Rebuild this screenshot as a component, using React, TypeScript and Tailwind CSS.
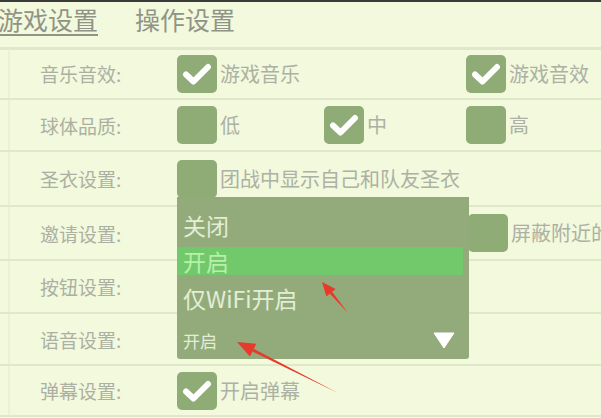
import type { ReactNode } from 'react';

const font = { fontFamily: '"Noto Sans CJK SC", "Noto Sans", sans-serif' };

function Check({ on = false }: { on?: boolean }) {
  return (
    <div className="w-[40px] h-[38px] shrink-0 rounded-[5px] bg-[#8fab76] flex items-center justify-center">
      {on && (
        <svg width="30" height="24" viewBox="0 0 30 24">
          <path
            d="M4 12.5 L11.5 19.5 L26 5"
            fill="none"
            stroke="#ffffff"
            strokeWidth="6"
            strokeLinecap="round"
            strokeLinejoin="round"
          />
        </svg>
      )}
    </div>
  );
}

function Option({ on, text, col }: { on?: boolean; text?: string; col: string }) {
  return (
    <div className={`flex items-center gap-[3px] ${col}`}>
      <Check on={on} />
      {text && <span className="text-[20px] text-[#adb1a4] whitespace-nowrap leading-none">{text}</span>}
    </div>
  );
}

function Row({ label, h, children }: { label: string; h: string; children?: ReactNode }) {
  return (
    <div className={`flex items-center border-b-2 border-[#e0e8ca] ${h}`}>
      <div className="w-[177px] shrink-0 pl-[40px] text-[19px] text-[#acb0a3] leading-none">{label}</div>
      <div className="relative flex-1 grid grid-cols-[147px_142px_135px] items-center">{children}</div>
    </div>
  );
}

function VoiceSelect() {
  return (
    <div className="relative w-[292px]">
      {/* opened list */}
      <div className="absolute bottom-full left-0 w-[292px] h-[124px] bg-[#93ab7a] pt-[10px] text-[23px] leading-none text-[#e3eed6]">
        <div className="h-[36px] flex items-center pl-[6px]">关闭</div>
        <div className="mt-[4px] mr-[6px] h-[28px] flex items-center pl-[6px] bg-[#72c96c] text-[#b8f0a8]">开启</div>
        <div className="h-[46px] flex items-center pl-[6px]">仅WiFi开启</div>
      </div>
      <div className="h-[38px] bg-[#93ab7a] rounded-b-[3px] flex items-center justify-between pl-[6px] pr-[14px]">
        <span className="text-[17px] leading-none text-[#e3eed6]">开启</span>
        <svg width="22" height="17" viewBox="0 0 22 17">
          <path d="M1 1 L21 1 L11 16 Z" fill="#ffffff" stroke="#ffffff" strokeLinejoin="round" />
        </svg>
      </div>
    </div>
  );
}

export default function App() {
  return (
    <div className="relative w-[601px] h-[418px] overflow-hidden bg-[#f2f9dc]" style={font}>
      <div className="h-[2px] bg-[#3b3b39]" />
      <div className="h-[48px] flex items-start gap-[37px] border-b-[3px] border-[#e0e8ca] pt-[3px] text-[25px] leading-none text-[#909487]">
        <div className="-ml-[2px] pt-[2px] pb-[2px] border-b-2 border-[#909487]">游戏设置</div>
        <div className="pt-[2px]">操作设置</div>
      </div>
      <div className="border-l-2 border-[#eaf2d4] ml-[8px] -mt-px">
        <div className="-ml-[10px]">
          <Row label="音乐音效:" h="h-[51px]">
            <Option on text="游戏音乐" col="col-start-1" />
            <Option on text="游戏音效" col="col-start-3" />
          </Row>
          <Row label="球体品质:" h="h-[52px]">
            <Option text="低" col="col-start-1" />
            <Option on text="中" col="col-start-2" />
            <Option text="高" col="col-start-3" />
          </Row>
          <Row label="圣衣设置:" h="h-[55px]">
            <Option text="团战中显示自己和队友圣衣" col="col-start-1 col-span-3" />
          </Row>
          <Row label="邀请设置:" h="h-[54px]">
            <Option text="屏蔽附近的人" col="col-start-3 ml-[2px]" />
          </Row>
          <Row label="按钮设置:" h="h-[53px]" />
          <Row label="语音设置:" h="h-[52px]">
            <div className="col-span-3 pt-[2px]">
              <VoiceSelect />
            </div>
          </Row>
          <Row label="弹幕设置:" h="h-[51px]">
            <Option on text="开启弹幕" col="col-start-1" />
          </Row>
        </div>
      </div>

      {/* red annotation arrows */}
      <svg className="absolute inset-0 pointer-events-none" width="601" height="418" viewBox="0 0 601 418">
        <polygon points="348,313 332.1,291.7 329.9,293.7" fill="#e8392b" />
        <polygon points="322,282 335.6,288.9 326.4,296.6" fill="#e8392b" />
        <polygon points="338,393 253.8,348.8 252.4,351.4" fill="#e8392b" />
        <polygon points="237,342 256.3,343.8 249.9,356.4" fill="#e8392b" />
      </svg>
    </div>
  );
}
